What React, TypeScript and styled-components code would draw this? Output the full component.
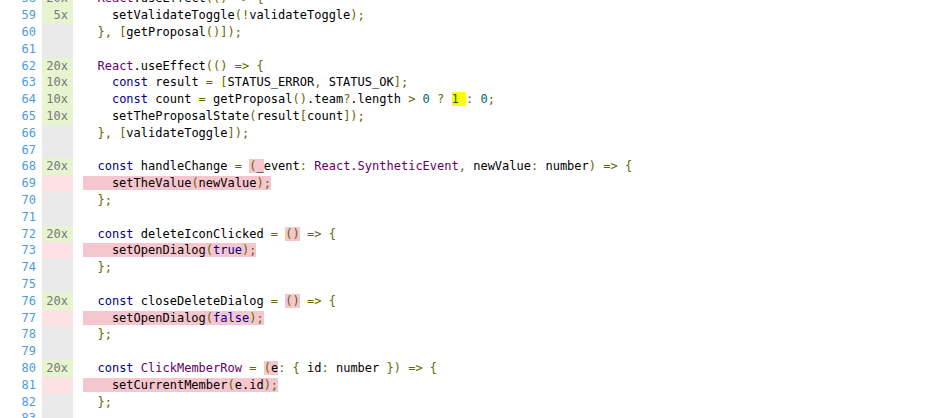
import React from "react";
import styled, { createGlobalStyle } from "styled-components";

const Global = createGlobalStyle`
  html, body { margin: 0; padding: 0; background: #fff; }
  body { font-family: "DejaVu Sans Mono", monospace; overflow: hidden; }
`;

type Status = "yes" | "no" | "neutral";
type Kind = "p" | "k" | "t" | "u" | "l";
type Tok = { k: Kind; s: string } | { miss: Tok[] } | { branch: Tok[] };
type Line = { n: number; count?: string; status: Status; full?: boolean; toks: Tok[] };

const p = (s: string): Tok => ({ k: "p", s });
const k = (s: string): Tok => ({ k: "k", s });
const t = (s: string): Tok => ({ k: "t", s });
const u = (s: string): Tok => ({ k: "u", s });
const l = (s: string): Tok => ({ k: "l", s });
const miss = (...toks: Tok[]): Tok => ({ miss: toks });
const branch = (...toks: Tok[]): Tok => ({ branch: toks });

const useEffectLine = [p("  "), t("React"), p(".useEffect"), u("(() => {")];

const lines: Line[] = [
  { n: 58, count: "20x", status: "yes", toks: useEffectLine },
  { n: 59, count: "5x", status: "yes", toks: [p("    setValidateToggle"), u("(!"), p("validateToggle"), u(");")] },
  { n: 60, status: "neutral", toks: [p("  "), u("}, ["), p("getProposal"), u("()]);")] },
  { n: 61, status: "neutral", toks: [] },
  { n: 62, count: "20x", status: "yes", toks: useEffectLine },
  { n: 63, count: "10x", status: "yes", toks: [p("    "), k("const"), p(" result "), u("= ["), p("STATUS_ERROR"), u(", "), p("STATUS_OK"), u("];")] },
  {
    n: 64, count: "10x", status: "yes",
    toks: [p("    "), k("const"), p(" count "), u("= "), p("getProposal"), u("()"), p(".team"), u("?"), p(".length "), u("> "), l("0"), u(" ? "), branch(l("1"), p(" ")), u(": "), l("0"), u(";")],
  },
  { n: 65, count: "10x", status: "yes", toks: [p("    setTheProposalState"), u("("), p("result"), u("["), p("count"), u("]);")] },
  { n: 66, status: "neutral", toks: [p("  "), u("}, ["), p("validateToggle"), u("]);")] },
  { n: 67, status: "neutral", toks: [] },
  {
    n: 68, count: "20x", status: "yes",
    toks: [p("  "), k("const"), p(" handleChange "), u("= "), miss(u("("), p("_")), p("event"), u(": "), t("React.SyntheticEvent"), u(", "), p("newValue"), u(": "), p("number"), u(") => {")],
  },
  { n: 69, status: "no", toks: [miss(p("    setTheValue"), u("("), p("newValue"), u(");"))] },
  { n: 70, status: "neutral", toks: [p("  "), u("};")] },
  { n: 71, status: "neutral", toks: [] },
  { n: 72, count: "20x", status: "yes", toks: [p("  "), k("const"), p(" deleteIconClicked "), u("= "), miss(u("()")), u(" => {")] },
  { n: 73, status: "no", toks: [miss(p("    setOpenDialog"), u("("), k("true"), u(");"))] },
  { n: 74, status: "neutral", toks: [p("  "), u("};")] },
  { n: 75, status: "neutral", toks: [] },
  { n: 76, count: "20x", status: "yes", toks: [p("  "), k("const"), p(" closeDeleteDialog "), u("= "), miss(u("()")), u(" => {")] },
  { n: 77, status: "no", toks: [miss(p("    setOpenDialog"), u("("), k("false"), u(");"))] },
  { n: 78, status: "neutral", toks: [p("  "), u("};")] },
  { n: 79, status: "neutral", toks: [] },
  {
    n: 80, count: "20x", status: "yes",
    toks: [p("  "), k("const"), p(" "), t("ClickMemberRow"), p(" "), u("= "), miss(u("("), p("e")), u(": { "), p("id"), u(": "), p("number"), u(" }) => {")],
  },
  { n: 81, status: "no", toks: [miss(p("    setCurrentMember"), u("("), p("e.id"), u(");"))] },
  { n: 82, status: "neutral", toks: [p("  "), u("};")] },
  { n: 83, status: "neutral", toks: [] },
  { n: 84, status: "neutral", toks: [] },
];

const Listing = styled.div`
  margin-top: -9.6px;
  display: flex;
  flex-direction: column;
  font-family: "DejaVu Sans Mono", monospace;
  font-size: 12px;
  line-height: 16.8px;
`;

const Row = styled.div`
  display: grid;
  grid-template-columns: 42px 31px 1fr;
  height: 16.8px;
`;

const LineNo = styled.a`
  text-align: right;
  padding-right: 6px;
  color: #4b9be2;
  text-decoration: none;
`;

const countBg: Record<Status, string> = {
  yes: "rgb(230, 245, 208)",
  no: "#fce1e5",
  neutral: "#eaeaea",
};

const Count = styled.span<{ $status: Status }>`
  text-align: right;
  padding-right: 5px;
  color: #777;
  background: ${(props) => countBg[props.$status]};
`;

const Code = styled.pre`
  margin: 0;
  padding-left: 10px;
  font: inherit;
  white-space: pre;
  color: #000;
`;

const tokColor: Record<Kind, string> = {
  p: "#000",
  k: "#008",
  t: "#606",
  u: "#660",
  l: "#066",
};

const Token = styled.span<{ $k: Kind }>`
  color: ${(props) => tokColor[props.$k]};
`;

const Missed = styled.span`
  background: #f6c6ce;
`;

const Branch = styled.span`
  background: #ffff00;
`;

function renderToks(toks: Tok[]): React.ReactNode[] {
  return toks.map((tok, i) => {
    if ("miss" in tok) return <Missed key={i}>{renderToks(tok.miss)}</Missed>;
    if ("branch" in tok) return <Branch key={i}>{renderToks(tok.branch)}</Branch>;
    return (
      <Token key={i} $k={tok.k}>
        {tok.s}
      </Token>
    );
  });
}

export default function App() {
  return (
    <>
      <Global />
      <Listing>
        {lines.map((line) => (
          <Row key={line.n}>
            <LineNo href={`#L${line.n}`}>{line.n}</LineNo>
            <Count $status={line.status}>{line.count ?? "\u00a0"}</Count>
            <Code>{renderToks(line.toks)}</Code>
          </Row>
        ))}
      </Listing>
    </>
  );
}
